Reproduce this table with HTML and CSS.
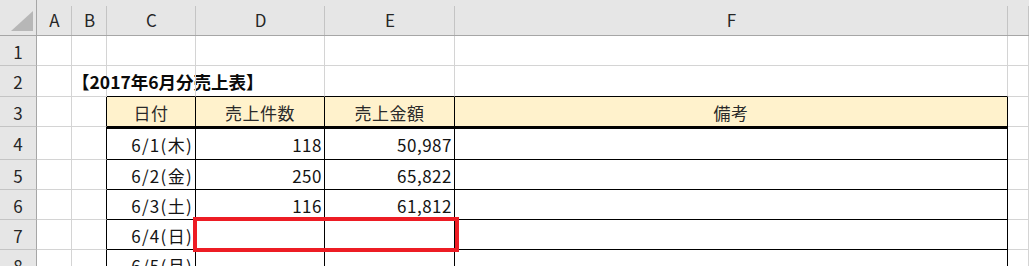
FILE: index.html
```html
<!DOCTYPE html>
<html lang="ja">
<head>
<meta charset="utf-8">
<title>2017年6月分売上表</title>
<link rel="stylesheet" href="styles.css">
</head>
<body>
<div class="sheet">
  <div class="corner"><svg class="tri" width="22" height="20" viewBox="0 0 22 20"><polygon points="22,0 22,20 0,20" fill="#b7b7b7"/></svg></div>
  <div class="colhead">A</div>
  <div class="colhead">B</div>
  <div class="colhead">C</div>
  <div class="colhead">D</div>
  <div class="colhead">E</div>
  <div class="colhead">F</div>
  <div class="colhead"></div>

  <div class="rowhead">1</div>
  <div class="cell"></div><div class="cell"></div><div class="cell"></div><div class="cell"></div><div class="cell"></div><div class="cell"></div><div class="cell"></div>

  <div class="rowhead">2</div>
  <div class="cell"></div>
  <div class="cell title">【2017年6月分売上表】</div>
  <div class="cell tabtop"></div><div class="cell tabtop"></div><div class="cell tabtop"></div><div class="cell tabtop"></div>
  <div class="cell"></div>

  <div class="rowhead">3</div>
  <div class="cell"></div><div class="cell tableft"></div>
  <div class="cell tab th">日付</div>
  <div class="cell tab th">売上件数</div>
  <div class="cell tab th">売上金額</div>
  <div class="cell tab th">備考</div>
  <div class="cell"></div>

  <div class="rowhead">4</div>
  <div class="cell"></div><div class="cell tableft"></div>
  <div class="cell tab first num date">6/1(木)</div>
  <div class="cell tab first num">118</div>
  <div class="cell tab first num">50,987</div>
  <div class="cell tab first"></div>
  <div class="cell"></div>

  <div class="rowhead">5</div>
  <div class="cell"></div><div class="cell tableft"></div>
  <div class="cell tab num date">6/2(金)</div>
  <div class="cell tab num">250</div>
  <div class="cell tab num">65,822</div>
  <div class="cell tab"></div>
  <div class="cell"></div>

  <div class="rowhead">6</div>
  <div class="cell"></div><div class="cell tableft"></div>
  <div class="cell tab num date">6/3(土)</div>
  <div class="cell tab num">116</div>
  <div class="cell tab num">61,812</div>
  <div class="cell tab"></div>
  <div class="cell"></div>

  <div class="rowhead">7</div>
  <div class="cell"></div><div class="cell tableft"></div>
  <div class="cell tab num date">6/4(日)</div>
  <div class="cell tab num"></div>
  <div class="cell tab num"></div>
  <div class="cell tab"></div>
  <div class="cell"></div>

  <div class="rowhead">8</div>
  <div class="cell"></div><div class="cell tableft"></div>
  <div class="cell tab num date">6/5(月)</div>
  <div class="cell tab num"></div>
  <div class="cell tab num"></div>
  <div class="cell tab"></div>
  <div class="cell"></div>

  <div class="highlight"></div>
</div>
</body>
</html>
```

FILE: styles.css
```css
* { box-sizing: border-box; }
html, body {
  margin: 0;
  padding: 0;
  background: #ffffff;
}
body {
  font-family: "Noto Sans CJK JP", "Noto Sans", sans-serif;
  font-size: 17px;
  color: #141414;
  overflow: hidden;
}
.sheet {
  position: relative;
  display: grid;
  grid-template-columns: 37px 35px 35px 89px 129px 130px 553px 1fr;
  grid-template-rows: 36px 30px 31px 30px 33px 30px 30px 30px 30px;
  width: 1029px;
  height: 266px;
  overflow: hidden;
}
.corner {
  background: #e6e6e6;
  border-right: 1px solid #a6a6a6;
  border-bottom: 1px solid #a6a6a6;
  display: flex;
  align-items: flex-end;
  justify-content: flex-end;
  padding: 0 3px 4px 0;
}
.tri { display: block; }
.colhead {
  position: relative;
  background: #e6e6e6;
  border-bottom: 1px solid #a6a6a6;
  display: flex;
  align-items: center;
  justify-content: center;
  padding-top: 4px;
  color: #262626;
  line-height: 1;
}
.colhead::after {
  content: "";
  position: absolute;
  right: 0;
  top: 6px;
  bottom: 0;
  width: 1px;
  background: #c4c4c4;
}
.rowhead {
  background: #e6e6e6;
  border-right: 1px solid #a6a6a6;
  border-bottom: 1px solid #c4c4c4;
  display: flex;
  align-items: center;
  justify-content: center;
  color: #262626;
  line-height: 1;
  padding-top: 1px;
}
.cell {
  border-right: 1px solid #d4d4d4;
  border-bottom: 1px solid #d4d4d4;
  display: flex;
  align-items: center;
  line-height: 1;
  padding: 1px 3px 0 3px;
  white-space: nowrap;
}
.title {
  font-weight: bold;
  font-size: 17.5px;
  overflow: visible;
  padding-left: 0;
  color: #0a0a0a;
}
.tabtop { border-bottom-color: #000; }
.tableft { border-right-color: #000; }
.tab {
  border-right-color: #000;
  border-bottom-color: #000;
}
.th {
  background: #fff2cc;
  justify-content: center;
  color: #2a2a2a;
  letter-spacing: 0.5px;
}
.first { border-top: 2px solid #000; }
.num {
  justify-content: flex-end;
  letter-spacing: 0.5px;
  padding-right: 2px;
}
.date { letter-spacing: 1.3px; }
.highlight {
  position: absolute;
  left: 193px;
  top: 217px;
  width: 266px;
  height: 35px;
  border: 4px solid #ed1c24;
}
```
